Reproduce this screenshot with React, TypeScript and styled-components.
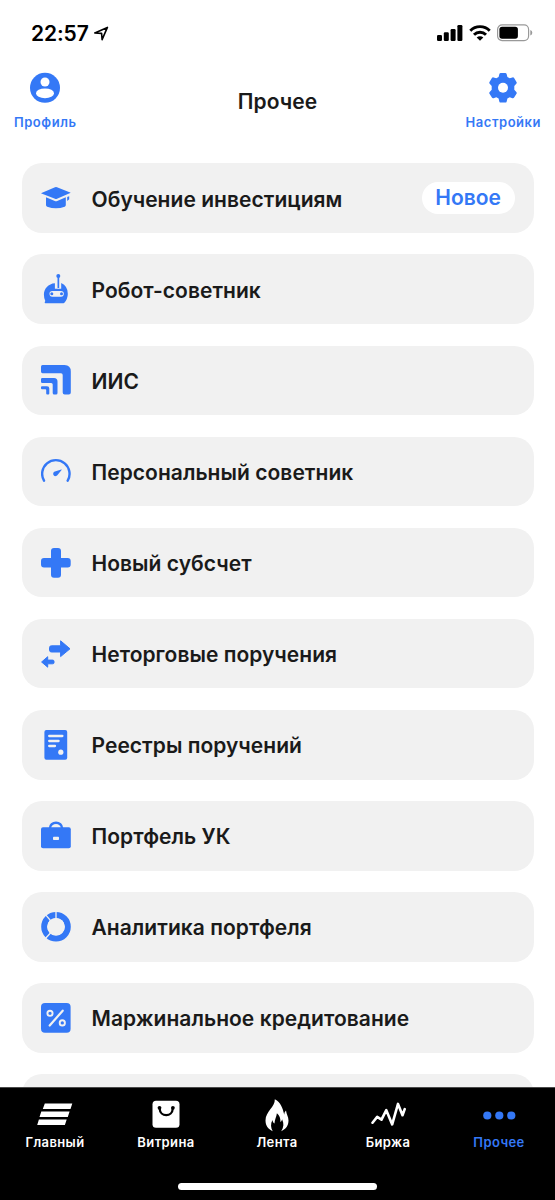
import React from 'react';
import styled, { createGlobalStyle } from 'styled-components';

const BLUE = '#3478f6';
const CARD = '#f1f1f1';

const GlobalStyle = createGlobalStyle`
  * { box-sizing: border-box; }
  html, body { margin: 0; padding: 0; background: #fff; }
  body { font-family: Inter, "Liberation Sans", sans-serif; overflow: hidden; }
`;

const Screen = styled.div`
  width: 555px;
  height: 1200px;
  display: flex;
  flex-direction: column;
  background: #fff;
  overflow: hidden;
`;

const StatusBar = styled.div`
  flex: none;
  height: 66px;
  padding: 0 22px 0 31px;
  display: flex;
  align-items: center;
  justify-content: space-between;
`;

const StatusGroup = styled.div<{ $gap: number }>`
  display: flex;
  align-items: center;
  gap: ${(p) => p.$gap}px;
`;

const Time = styled.span`
  padding-top: 2px;
  font-size: 21px;
  line-height: 26px;
  font-weight: 600;
  letter-spacing: -0.1px;
  color: #000;
`;

const Header = styled.header`
  flex: none;
  height: 97.4px;
  padding: 6px 14px 0;
  display: grid;
  grid-template-columns: 1fr auto 1fr;
`;

const HeaderButton = styled.button<{ $end?: boolean }>`
  justify-self: ${(p) => (p.$end ? 'end' : 'start')};
  align-self: start;
  display: flex;
  flex-direction: column;
  align-items: center;
  padding: 0;
  border: 0;
  background: none;
  color: ${BLUE};
  font-family: inherit;
`;

const HeaderLabel = styled.span`
  margin-top: 10px;
  font-size: 13px;
  line-height: 16px;
  font-weight: 600;
  letter-spacing: 0.53px;
`;

const Title = styled.h1`
  margin: 17px 0 0;
  font-size: 21px;
  line-height: 26px;
  font-weight: 600;
  letter-spacing: 0.05px;
  color: #1a1a1a;
`;

const List = styled.main`
  flex: 1;
  min-height: 0;
  overflow: hidden;
  padding: 0 21.5px;
  display: flex;
  flex-direction: column;
  gap: 21.45px;
`;

const Row = styled.div`
  flex: none;
  height: 69.65px;
  border-radius: 20px;
  background: ${CARD};
  display: flex;
  align-items: center;
  padding: 0 19px;
`;

const RowLabel = styled.span`
  flex: 1;
  margin: 3px 0 0 21px;
  font-size: 21px;
  line-height: 28px;
  font-weight: 600;
  letter-spacing: 0.04px;
  color: #1a1a1a;
  white-space: nowrap;
`;

const Badge = styled.span`
  height: 32px;
  padding: 0 13.5px;
  border-radius: 16px;
  background: #fff;
  color: ${BLUE};
  font-size: 21px;
  line-height: 32px;
  font-weight: 600;
`;

const Icon = styled.svg`
  flex: none;
  display: block;
`;

const GearIcon = styled(Icon)`
  margin-right: 1px;
`;

const TabBar = styled.nav`
  flex: none;
  height: 113px;
  background: #000;
  border-top: 1px solid #4a4a4a;
  display: flex;
  flex-direction: column;
`;

const Tabs = styled.div`
  display: grid;
  grid-template-columns: repeat(5, 111px);
`;

const Tab = styled.button<{ $active?: boolean }>`
  display: flex;
  flex-direction: column;
  align-items: center;
  padding: 9px 1px 0 0;
  border: 0;
  background: none;
  color: ${(p) => (p.$active ? BLUE : '#fff')};
  font-family: inherit;
`;

const TabLabel = styled.span`
  margin-top: 1px;
  font-size: 13px;
  line-height: 16px;
  font-weight: 600;
  letter-spacing: 0.4px;
`;

const HomeIndicator = styled.div`
  align-self: center;
  margin-top: 33px;
  width: 199px;
  height: 7px;
  border-radius: 4px;
  background: #fff;
`;

const RowIcon = ({ children }: { children: React.ReactNode }) => (
  <Icon width="30" height="30" viewBox="0 0 30 30" fill={BLUE}>
    {children}
  </Icon>
);

const TabIcon = ({ children }: { children: React.ReactNode }) => (
  <Icon width="36" height="36" viewBox="0 0 36 36" fill="currentColor">
    {children}
  </Icon>
);

const items: { label: string; badge?: string; icon: React.ReactNode }[] = [
  {
    label: 'Обучение инвестициям',
    badge: 'Новое',
    icon: (
      <>
        <path d="M14 4.300q1-.4 2 0L29.200 9.500q.6.3 0 .6L16 15.700q-1 .4-2 0L.5 10.600q-.6-.3 0-.6Z" />
        <path d="M5 14.300 13.800 18q1.200.5 2.400 0L24.800 14.300v7.800q0 1.200-1.100 1.700-8.700 3-17.500 0-1.200-.5-1.200-1.700Z" />
        <path d="M26.200 14 28.200 13.200V16.300L26.200 18Z" />
      </>
    ),
  },
  {
    label: 'Робот-советник',
    icon: (
      <>
        <circle cx="17.300" cy="2" r="2" />
        <path d="M16.500 2h1.700v12h-1.700Z" />
        <path d="M13.900 9.200v5.600h6.300V9q6.600 3 6.600 10.700 0 5-3.400 9.100-.3.400-.9.400H4.400q-.8 0-.7-.8.1-.5.600-1.300Q2.900 24.200 2.900 20.600c0-5.800 4.400-11 11-11.400Z" />
        <rect x="8.500" y="17" width="14.300" height="5.700" rx="2.850" fill={CARD} />
        <circle cx="10.800" cy="19.800" r="1.500" />
        <circle cx="20.500" cy="19.800" r="1.500" />
      </>
    ),
  },
  {
    label: 'ИИС',
    icon: (
      <>
        <path d="M1.500 0H23.500Q29.800 0 29.800 6.500V27.500Q29.800 29.500 27.800 29.500H23.700Q21.700 29.500 21.700 27.500V10Q21.700 8.300 20 8.300H1.500Q0 8.300 0 6.500V1.800Q0 0 1.500 0Z" />
        <path d="M1.300 13H13Q16.500 13 16.500 16.500V28Q16.500 29.500 15 29.500H13.200Q11.700 29.500 11.700 28V19.500Q11.700 18 10.200 18H1.300Q0 18 0 16.700V14.300Q0 13 1.300 13Z" />
        <path d="M1 21.300H6Q8.300 21.300 8.300 23.500V28.500Q8.300 29.500 7.300 29.500H6.200Q5.200 29.500 5.200 28.500V25Q5.200 24.200 4.400 24.200H1Q0 24.200 0 23.200V22.300Q0 21.300 1 21.300Z" />
      </>
    ),
  },
  {
    label: 'Персональный советник',
    icon: (
      <>
        <path d="M3 24.700A13.700 13.700 0 1 1 26.700 24.700" fill="none" stroke={BLUE} strokeWidth="2.400" strokeLinecap="round" />
        <path d="M20.300 13.500q.7-.1.300.5L16.500 18.900a2.300 2.300 0 1 1-2.600-3.300Z" />
      </>
    ),
  },
  {
    label: 'Новый субсчет',
    icon: (
      <path d="M13 0h4q3 0 3 3v6.900h6.700q3 0 3 3V16.500q0 3-3 3H20v7.200q0 3-3 3H13q-3 0-3-3V19.500H3q-3 0-3-3V12.900q0-3 3-3h7V3q0-3 3-3Z" />
    ),
  },
  {
    label: 'Неторговые поручения',
    icon: (
      <g stroke={BLUE} strokeWidth="1" strokeLinejoin="round">
        <path d="M19.600 1.800 29 9.800 19.600 17.600V13H10.500Q8.500 13 8.500 11.300V8.500Q8.500 6.800 10.500 6.800h9.100Z" />
        <path d="M6.700 17.700 .6 23 6.700 28.200V24.800H11.500Q13 24.800 13 23.800V22.200Q13 21.100 11.500 21.100H6.700Z" />
      </g>
    ),
  },
  {
    label: 'Реестры поручений',
    icon: (
      <>
        <rect x="3.400" y="0" width="22.800" height="29.800" rx="2" />
        <path d="M8.200 6h13.200M8.200 11h9.400M8.200 16h5.800" stroke={CARD} strokeWidth="2.300" strokeLinecap="round" />
        <circle cx="19.800" cy="22.200" r="2.600" fill={CARD} />
      </>
    ),
  },
  {
    label: 'Портфель УК',
    icon: (
      <>
        <rect x="0" y="6.300" width="29.800" height="21" rx="2" />
        <path d="M9 7a6 5.300 0 0 1 12 0" fill="none" stroke={BLUE} strokeWidth="2.400" />
        <rect x="12" y="15.700" width="6" height="3.300" rx=".8" fill={CARD} />
      </>
    ),
  },
  {
    label: 'Аналитика портфеля',
    icon: (
      <>
        <circle cx="15" cy="14.800" r="11.800" fill="none" stroke={BLUE} strokeWidth="6" />
        <path d="M15 15V-1M15 15 4.500 2.700M15 15 3.500 27.500" stroke={CARD} strokeWidth="1.300" />
        <circle cx="15" cy="14.800" r="8.800" fill={CARD} />
      </>
    ),
  },
  {
    label: 'Маржинальное кредитование',
    icon: (
      <>
        <rect x="0" y="0" width="29.600" height="29.700" rx="4" />
        <g fill="none" stroke={CARD} strokeWidth="1.900">
          <path d="M21.700 7.700 8.700 22.500" strokeLinecap="round" strokeWidth="2.200" />
          <circle cx="9" cy="10.300" r="2.600" />
          <circle cx="21.300" cy="19.900" r="2.600" />
        </g>
      </>
    ),
  },
];

const tabs: { label: string; active?: boolean; icon: React.ReactNode }[] = [
  {
    label: 'Главный',
    icon: (
      <path d="M7.800 6.500H35.300L33.500 12.100H5.800ZM4.300 14.500H32.600L30.800 20H2.500ZM1.900 22.400H29.700L27.900 28H.2Z" />
    ),
  },
  {
    label: 'Витрина',
    icon: (
      <>
        <rect x="4.500" y="3.800" width="27" height="27" rx="3.500" />
        <path d="M11.600 11.200C12 20.500 24.400 20.500 24.800 11.200" fill="none" stroke="#000" strokeWidth="2.300" />
        <circle cx="11.500" cy="10.800" r="1.900" fill="#000" />
        <circle cx="24.900" cy="10.800" r="1.900" fill="#000" />
      </>
    ),
  },
  {
    label: 'Лента',
    icon: (
      <path d="M15.800 2.300C16.300 10 6.500 14.500 6.500 23.500c0 5 2.600 8.500 7.200 10.700-2-3.700-2.300-7.300-.2-11.200.2 1.700.9 2.900 2 3.500.2-4 1.900-6.500 2.400-10.300 2.600 2 3.700 5 3.500 8.800 1-.7 1.500-1.700 1.700-2.800 2 4.300 1.700 8-.9 12C27 32 29.500 28.500 29.500 23.500c0-3.800-2.200-6.500-2.500-10-1.200 1.100-1.700 2.500-1.700 4.200C23.500 11 22 5.500 15.800 2.300Z" />
    ),
  },
  {
    label: 'Биржа',
    icon: (
      <path d="M2.500 25.700 7.200 19.900 11.500 22.700 16.300 13.200 22.200 27.400 28 6.900 32.500 18.200 34.700 12.100" fill="none" stroke="currentColor" strokeWidth="2.600" strokeLinecap="round" strokeLinejoin="round" />
    ),
  },
  {
    label: 'Прочее',
    active: true,
    icon: (
      <>
        <circle cx="6.300" cy="18.500" r="4.100" />
        <circle cx="18.300" cy="18.500" r="4.100" />
        <circle cx="30.300" cy="18.500" r="4.100" />
      </>
    ),
  },
];

export default function App() {
  return (
    <>
      <GlobalStyle />
      <Screen>
        <StatusBar>
          <StatusGroup $gap={5}>
            <Time>22:57</Time>
            <Icon width="15" height="15" viewBox="0 0 15 15">
              <path d="M.8 6.900 13.400 1.400 8.100 13.600 7.600 7.400Z" fill="none" stroke="#000" strokeWidth="1.600" strokeLinejoin="round" />
            </Icon>
          </StatusGroup>
          <StatusGroup $gap={6}>
            <Icon width="26" height="16" viewBox="0 0 26 16">
              <rect x="0" y="10" width="5" height="6" rx="1.200" />
              <rect x="6.800" y="7.300" width="5" height="8.700" rx="1.200" />
              <rect x="13.600" y="4" width="5" height="12" rx="1.200" />
              <rect x="20.400" y="0" width="5" height="16" rx="1.200" />
            </Icon>
            <Icon width="22" height="16" viewBox="0 0 22 16" fill="none" stroke="#000" strokeWidth="2.900">
              <path d="M1.300 5.700a13.700 13.700 0 0 1 19.400 0M5 9.700a8.500 8.500 0 0 1 12 0" />
              <path d="M11 15.800 7.700 12.500a4.700 4.700 0 0 1 6.600 0Z" fill="#000" stroke="none" />
            </Icon>
            <Icon width="36" height="18" viewBox="0 0 36 18">
              <rect x=".6" y=".9" width="31" height="15.700" rx="4.500" fill="none" stroke="#999" strokeWidth="1.200" />
              <rect x="2.400" y="2.700" width="18.500" height="12.100" rx="2.700" />
              <path d="M33.300 6q2 .8 2 2.800t-2 2.800Z" fill="#999" />
            </Icon>
          </StatusGroup>
        </StatusBar>

        <Header>
          <HeaderButton>
            <Icon width="32" height="32" viewBox="0 0 32 32">
              <circle cx="16" cy="15.800" r="15" fill={BLUE} />
              <circle cx="16" cy="10" r="4.500" fill="#fff" />
              <ellipse cx="16" cy="21.300" rx="9" ry="4.900" fill="#fff" />
            </Icon>
            <HeaderLabel>Профиль</HeaderLabel>
          </HeaderButton>
          <Title>Прочее</Title>
          <HeaderButton $end>
            <GearIcon width="32" height="32" viewBox="0 0 32 32">
              <path
                d="M13.800 1h4.400q1.200 0 1.500 1.200l.7 2.800 2.300 1.300 2.700-.9q1.100-.4 1.700.6l2.400 3.900q.6 1-.2 1.800l-2 2.200v3.800l2 2.200q.8.800.2 1.800l-2.400 3.900q-.6 1-1.700.6l-2.700-.9-2.300 1.300-.7 2.800q-.3 1.200-1.500 1.200h-4.400q-1.200 0-1.500-1.200l-.7-2.800-2.300-1.300-2.700.9q-1.100.4-1.700-.6l-2.400-3.900q-.6-1 .2-1.800l2-2.200v-3.800l-2-2.200q-.8-.8-.2-1.800l2.400-3.900q.6-1 1.700-.6l2.700.9 2.300-1.300.7-2.800Q12.600 1 13.800 1Z"
                fill={BLUE}
              />
              <circle cx="16" cy="15.800" r="5" fill="#fff" />
            </GearIcon>
            <HeaderLabel>Настройки</HeaderLabel>
          </HeaderButton>
        </Header>

        <List>
          {items.map((item) => (
            <Row key={item.label}>
              <RowIcon>{item.icon}</RowIcon>
              <RowLabel>{item.label}</RowLabel>
              {item.badge && <Badge>{item.badge}</Badge>}
            </Row>
          ))}
          <Row />
        </List>

        <TabBar>
          <Tabs>
            {tabs.map((tab) => (
              <Tab key={tab.label} $active={tab.active}>
                <TabIcon>{tab.icon}</TabIcon>
                <TabLabel>{tab.label}</TabLabel>
              </Tab>
            ))}
          </Tabs>
          <HomeIndicator />
        </TabBar>
      </Screen>
    </>
  );
}
